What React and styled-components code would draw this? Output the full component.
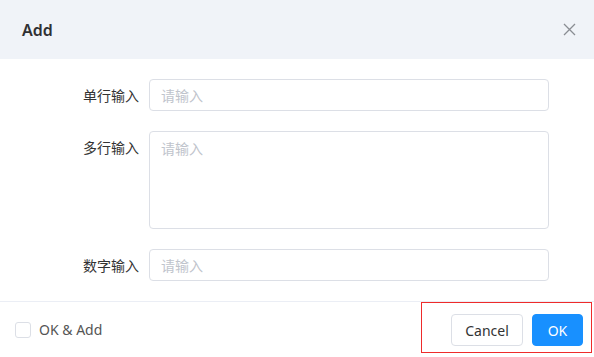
import React from "react";
import styled, { createGlobalStyle } from "styled-components";

const GlobalStyle = createGlobalStyle`
  html, body {
    margin: 0;
    padding: 0;
    background: #ffffff;
    font-family: "Noto Sans", "Noto Sans CJK SC", sans-serif;
  }
  * { box-sizing: border-box; }
`;

const Dialog = styled.div`
  width: 594px;
  height: 357px;
  display: flex;
  flex-direction: column;
  background: #ffffff;
  overflow: hidden;
`;

const Header = styled.div`
  height: 59px;
  flex-shrink: 0;
  display: flex;
  align-items: center;
  justify-content: space-between;
  padding: 0 15px 0 22px;
  background: #f0f3f8;
`;

const Title = styled.div`
  font-size: 16px;
  font-weight: 600;
  color: #303133;
  line-height: 22px;
`;

const CloseButton = styled.button`
  width: 20px;
  height: 20px;
  padding: 0;
  border: none;
  background: transparent;
  display: flex;
  align-items: center;
  justify-content: center;
  cursor: pointer;
`;

const Body = styled.div`
  flex: 1;
  display: flex;
  flex-direction: column;
  gap: 20px;
  padding: 20px 0 0 0;
`;

const Row = styled.div`
  display: grid;
  grid-template-columns: 139px 400px;
  column-gap: 10px;
  align-items: start;
`;

const Label = styled.label`
  text-align: right;
  font-size: 14px;
  line-height: 32px;
  color: #333333;
  font-family: "Noto Sans CJK SC", sans-serif;
`;

const fieldBase = `
  width: 400px;
  border: 1px solid #dcdfe6;
  border-radius: 4px;
  padding: 0 11px;
  font-size: 14px;
  color: #606266;
  background: #ffffff;
  outline: none;
  font-family: "Noto Sans CJK SC", sans-serif;
  &::placeholder { color: #c0c4cc; }
`;

const TextInput = styled.input`
  ${fieldBase}
  height: 32px;
`;

const TextArea = styled.textarea`
  ${fieldBase}
  height: 98px;
  padding-top: 5px;
  line-height: 22px;
  resize: none;
  display: block;
`;

const Footer = styled.div`
  height: 56px;
  flex-shrink: 0;
  border-top: 1px solid #ebeef5;
  display: flex;
  align-items: flex-start;
  justify-content: space-between;
  padding: 0 2px 0 15px;
`;

const CheckLabel = styled.label`
  display: flex;
  align-items: center;
  gap: 8px;
  margin-top: 20px;
  font-size: 14px;
  color: #555555;
  line-height: 16px;
  cursor: pointer;
`;

const CheckBox = styled.span`
  width: 16px;
  height: 16px;
  border: 1px solid #dcdfe6;
  border-radius: 3px;
  background: #ffffff;
`;

const ButtonGroup = styled.div`
  display: flex;
  gap: 9px;
  padding: 11px 8px 6px 29px;
  border: 1px solid #ee2b2b;
`;

const Button = styled.button`
  height: 32px;
  width: ${(p) => (p.$primary ? "51px" : "72px")};
  padding: 0;
  border-radius: 4px;
  font-size: 14px;
  font-family: "Noto Sans", sans-serif;
  cursor: pointer;
  border: 1px solid ${(p) => (p.$primary ? "#1890ff" : "#dcdfe6")};
  background: ${(p) => (p.$primary ? "#1890ff" : "#ffffff")};
  color: ${(p) => (p.$primary ? "#ffffff" : "#333333")};
`;

export default function App() {
  return (
    <>
      <GlobalStyle />
      <Dialog>
        <Header>
          <Title>Add</Title>
          <CloseButton aria-label="close">
            <svg width="13" height="13" viewBox="0 0 13 13">
              <path
                d="M1 1 L12 12 M12 1 L1 12"
                stroke="#8a8d93"
                strokeWidth="1.3"
                fill="none"
              />
            </svg>
          </CloseButton>
        </Header>
        <Body>
          <Row>
            <Label>单行输入</Label>
            <TextInput placeholder="请输入" />
          </Row>
          <Row>
            <Label>多行输入</Label>
            <TextArea placeholder="请输入" />
          </Row>
          <Row>
            <Label>数字输入</Label>
            <TextInput placeholder="请输入" />
          </Row>
        </Body>
        <Footer>
          <CheckLabel>
            <CheckBox />
            OK &amp; Add
          </CheckLabel>
          <ButtonGroup>
            <Button>Cancel</Button>
            <Button $primary>OK</Button>
          </ButtonGroup>
        </Footer>
      </Dialog>
    </>
  );
}
